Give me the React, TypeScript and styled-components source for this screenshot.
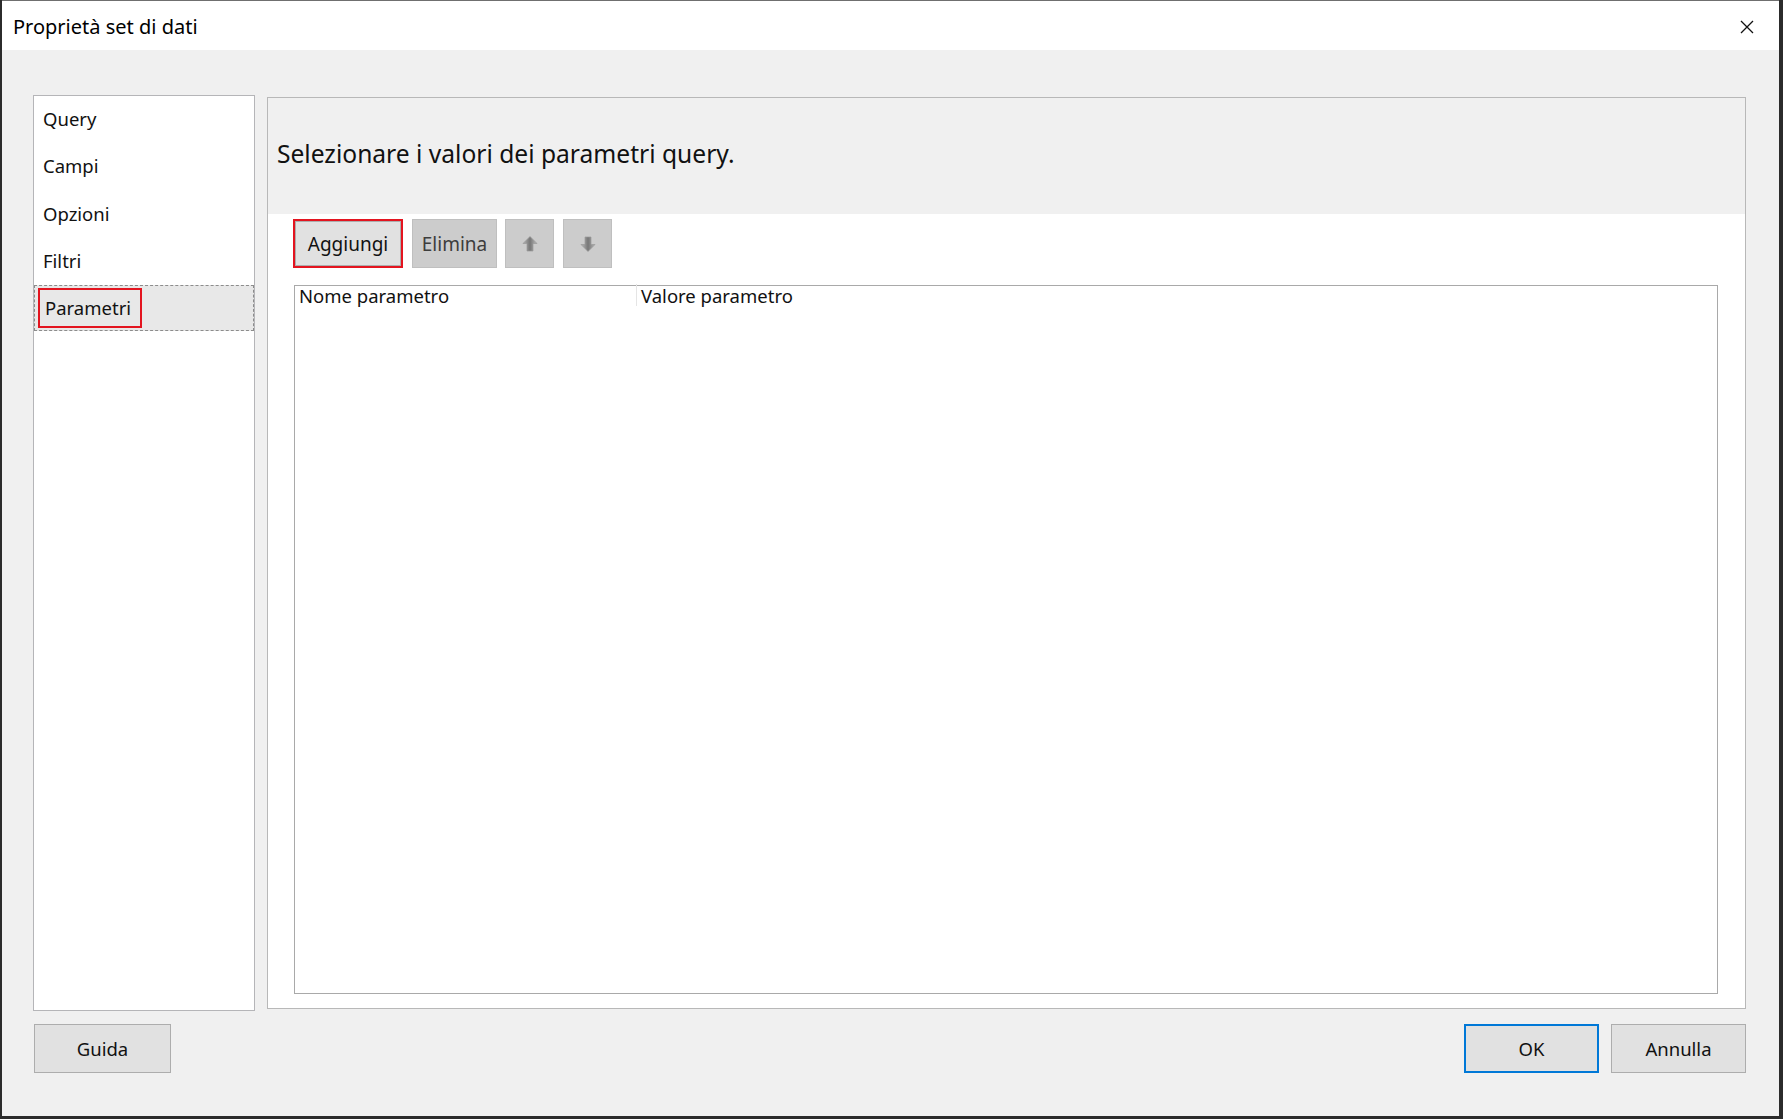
import React from 'react';
import styled, { createGlobalStyle } from 'styled-components';

const GlobalStyle = createGlobalStyle`
  html, body {
    margin: 0;
    padding: 0;
    background: #2b2b2b;
  }
  body {
    font-family: 'Noto Sans', 'Open Sans', sans-serif;
    color: #1b1b1b;
  }
  * {
    box-sizing: border-box;
  }
`;

const Window = styled.div`
  width: 1777px;
  height: 1116px;
  margin-left: 2px;
  border-top: 1px solid #6f6f6f;
  background: #f0f0f0;
  display: flex;
  flex-direction: column;
`;

const TitleBar = styled.div`
  height: 49px;
  background: #fff;
  display: flex;
  align-items: center;
  justify-content: space-between;
  padding: 2px 23px 0 11px;
`;

const Title = styled.div`
  font-size: 20px;
  color: #000;
`;

const CloseButton = styled.div`
  width: 18px;
  height: 18px;
  display: flex;
  align-items: center;
  justify-content: center;
`;

const Body = styled.div`
  flex: 1;
  display: flex;
  flex-direction: column;
  padding: 45px 33px 0 31px;
`;

const Main = styled.div`
  display: flex;
  gap: 12px;
  height: 916px;
`;

const NavList = styled.div`
  width: 222px;
  background: #fff;
  border: 1px solid #b5b5b8;
  display: flex;
  flex-direction: column;
`;

const NavItem = styled.div<{ $selected?: boolean }>`
  height: ${(p) => (p.$selected ? '46px' : '47.5px')};
  flex: none;
  display: flex;
  align-items: center;
  padding-left: ${(p) => (p.$selected ? '3px' : '8px')};
  padding-bottom: ${(p) => (p.$selected ? '0' : '3px')};
  font-size: 18.5px;
  color: #111;
  background: ${(p) => (p.$selected ? '#e8e8e8' : 'transparent')};
  border: ${(p) => (p.$selected ? '1px dashed #8c8c8c' : '1px solid transparent')};
  margin-top: ${(p) => (p.$selected ? '-1px' : '0')};
`;

const HighlightBox = styled.span`
  height: 40px;
  display: inline-flex;
  align-items: center;
  border: 2px solid #e3141f;
  padding: 0 9px 1px 5px;
`;

const Panel = styled.div`
  flex: 1;
  margin-top: 2px;
  height: 912px;
  background: #fff;
  border: 1px solid #b8b8b8;
  display: flex;
  flex-direction: column;
`;

const PanelHeader = styled.div`
  height: 116px;
  background: #f0f0f0;
  display: flex;
  align-items: center;
  padding: 0 0 6px 9px;
  font-size: 24.6px;
  color: #111;
`;

const Toolbar = styled.div`
  display: flex;
  align-items: center;
  padding: 5px 0 0 25px;
  gap: 8px;
`;

const RedFrame = styled.div`
  border: 2px solid #e3141f;
  margin-right: 1px;
`;

const ToolButton = styled.div<{ $w: number; $active?: boolean }>`
  width: ${(p) => p.$w}px;
  height: ${(p) => (p.$active ? 45 : 49)}px;
  display: flex;
  align-items: center;
  justify-content: center;
  font-size: 19px;
  background: ${(p) => (p.$active ? '#e1e1e1' : '#cccccc')};
  border: 1px solid ${(p) => (p.$active ? '#adadad' : '#bfbfbf')};
  color: ${(p) => (p.$active ? '#111' : '#3d3d3d')};
`;

const Grid = styled.div`
  flex: 1;
  margin: 17px 27px 14px 26px;
  border: 1px solid #a9a9a9;
  display: flex;
  flex-direction: column;
`;

const GridHeader = styled.div`
  display: flex;
  height: 22px;
  align-items: center;
  font-size: 18.5px;
  color: #111;
  margin-top: -2px;
`;

const HeaderCell = styled.div<{ $w?: number }>`
  width: ${(p) => (p.$w ? `${p.$w}px` : 'auto')};
  flex: ${(p) => (p.$w ? 'none' : '1')};
  padding-left: 4px;
  height: 100%;
  display: flex;
  align-items: center;
  border-right: ${(p) => (p.$w ? '1px solid #e5e5e5' : 'none')};
`;

const Footer = styled.div`
  display: flex;
  justify-content: space-between;
  padding: 13px 0 0 1px;
`;

const ButtonGroup = styled.div`
  display: flex;
  gap: 12px;
`;

const DialogButton = styled.div<{ $w: number; $default?: boolean }>`
  width: ${(p) => p.$w}px;
  height: 49px;
  display: flex;
  align-items: center;
  justify-content: center;
  font-size: 18.5px;
  color: #111;
  background: #e1e1e1;
  border: ${(p) => (p.$default ? '2px solid #0078d7' : '1px solid #adadad')};
`;

const ArrowIcon = styled.svg<{ $down?: boolean }>`
  width: 18px;
  height: 18px;
  transform: ${(p) => (p.$down ? 'rotate(180deg)' : 'none')};
`;

const Arrow = ({ down }: { down?: boolean }) => {
  const id = down ? 'arrow-down' : 'arrow-up';
  return (
    <ArrowIcon viewBox="0 0 18 18" $down={down}>
      <defs>
        <linearGradient id={id} x1="0" y1="0" x2="1" y2="0">
          <stop offset="0" stopColor="#b4b4b4" />
          <stop offset="0.5" stopColor="#777" />
          <stop offset="1" stopColor="#bcbcbc" />
        </linearGradient>
      </defs>
      <path
        d="M9 1.5 L16 8.5 L12 8.5 L12 16 L6 16 L6 8.5 L2 8.5 Z"
        fill={`url(#${id})`}
        stroke="#999"
        strokeWidth="0.7"
        strokeLinejoin="round"
      />
    </ArrowIcon>
  );
};

const navItems = ['Query', 'Campi', 'Opzioni', 'Filtri'];

export default function App() {
  return (
    <>
      <GlobalStyle />
      <Window>
        <TitleBar>
          <Title>Proprietà set di dati</Title>
          <CloseButton>
            <svg width="14" height="14" viewBox="0 0 14 14">
              <path d="M1 1 L13 13 M13 1 L1 13" stroke="#111" strokeWidth="1.3" />
            </svg>
          </CloseButton>
        </TitleBar>
        <Body>
          <Main>
            <NavList>
              {navItems.map((item) => (
                <NavItem key={item}>{item}</NavItem>
              ))}
              <NavItem $selected>
                <HighlightBox>Parametri</HighlightBox>
              </NavItem>
            </NavList>
            <Panel>
              <PanelHeader>Selezionare i valori dei parametri query.</PanelHeader>
              <Toolbar>
                <RedFrame>
                  <ToolButton $w={106} $active>
                    Aggiungi
                  </ToolButton>
                </RedFrame>
                <ToolButton $w={85}>Elimina</ToolButton>
                <ToolButton $w={49}>
                  <Arrow />
                </ToolButton>
                <ToolButton $w={49} style={{ marginLeft: 1 }}>
                  <Arrow down />
                </ToolButton>
              </Toolbar>
              <Grid>
                <GridHeader>
                  <HeaderCell $w={342}>Nome parametro</HeaderCell>
                  <HeaderCell>Valore parametro</HeaderCell>
                </GridHeader>
              </Grid>
            </Panel>
          </Main>
          <Footer>
            <DialogButton $w={137}>Guida</DialogButton>
            <ButtonGroup>
              <DialogButton $w={135} $default>
                OK
              </DialogButton>
              <DialogButton $w={135}>Annulla</DialogButton>
            </ButtonGroup>
          </Footer>
        </Body>
      </Window>
    </>
  );
}
